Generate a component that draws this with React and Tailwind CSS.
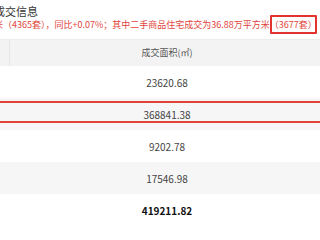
import React from "react";

const rows = [
  { value: "23620.68" },
  { value: "368841.38", striped: true, marked: true },
  { value: "9202.78" },
  { value: "17546.98", striped: true },
  { value: "419211.82", total: true },
];

const App = () => {
  return (
    <div className="w-[320px] h-[240px] overflow-hidden bg-white font-['Noto_Sans_CJK_SC','Noto_Sans',sans-serif]">
      {/* title */}
      <div className="-ml-[6px] pt-[2px] h-[19px] text-[11px] leading-[19px] text-[#333] whitespace-nowrap">
        成交信息
      </div>
      <div className="-ml-[6px] h-[12px] text-[9px] leading-[12px] text-[#e0463c] whitespace-nowrap">
        米（4365套），同比+0.07%；其中二手商品住宅成交为36.88万平方米
        <span className="relative">
          （3677套）
          <span className="pointer-events-none absolute left-0 right-0 -top-[3px] -bottom-[3px] border-2 border-[#e2332f] rounded-[1px]" />
        </span>
      </div>

      {/* table */}
      <div className="mt-[8px] w-[324px]">
        <div className="flex h-[27px] bg-[#f3f3f3] border-t border-[#ececec]">
          <div className="w-[10px] border-r border-[#e6e6e6]" />
          <div className="flex-1 flex items-center justify-center text-[9px] text-[#555]">
            成交面积(㎡)
          </div>
        </div>
        {rows.map((row, i) => (
          <div
            key={i}
            className={
              "relative flex h-[32px] " + (row.striped ? "bg-[#f6f6f6]" : "bg-white")
            }
          >
            <div className="w-[10px]" />
            <div
              className={
                "flex-1 flex items-center justify-center text-[10px] " +
                (row.total ? "font-bold text-[#111]" : "text-[#444]")
              }
            >
              {row.value}
            </div>
            {row.marked && (
              <div className="pointer-events-none absolute left-[-4px] right-[-4px] top-[3px] bottom-[7px] border-2 border-[#e0433a]" />
            )}
          </div>
        ))}
      </div>
    </div>
  );
};

export default App;
